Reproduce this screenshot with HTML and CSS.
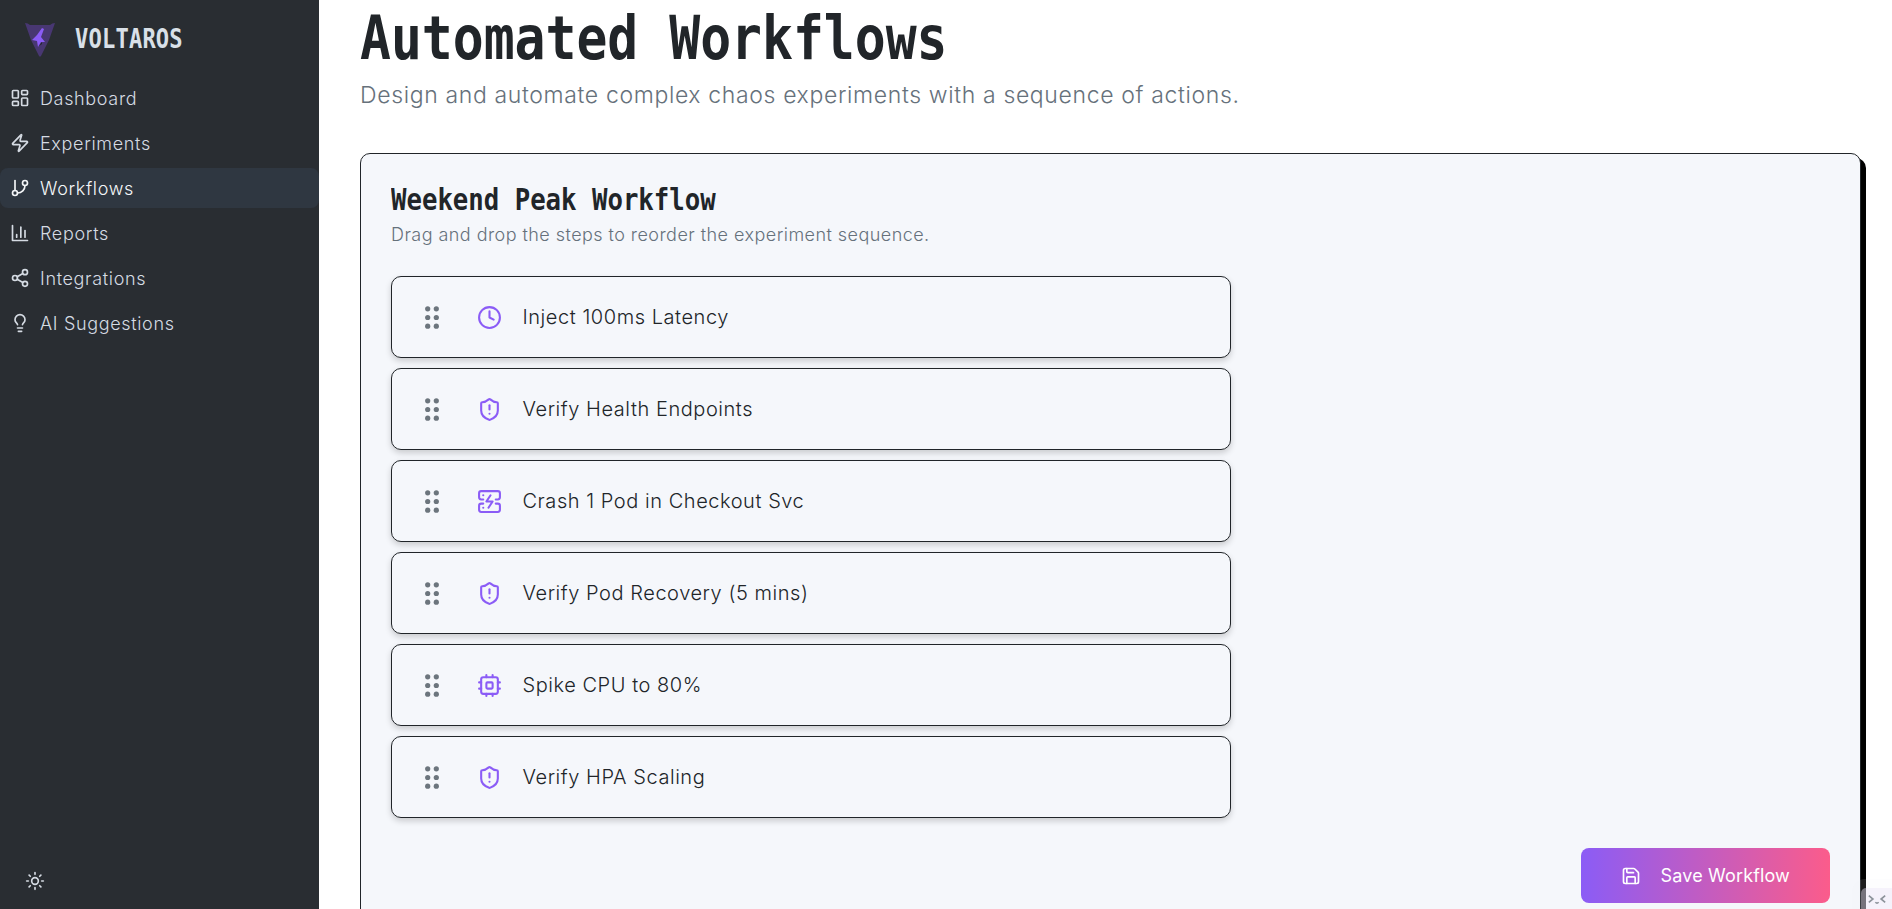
FILE: index.html
```html
<!DOCTYPE html>
<html lang="en">
<head>
<meta charset="utf-8">
<title>Voltaros – Automated Workflows</title>
<link rel="stylesheet" href="styles.css">
</head>
<body>
<aside class="sidebar">
  <div class="brand">
    <svg class="logo" viewBox="0 0 30 35"><path d="M0 1 Q3 1 5 3 H25 Q27 1 30 1 L24 18 L16 34 Q15 35 14 34 L6 18 Z" fill="#483772"/><path d="M17 6 L19 7 L16 15 L20 20 L16 20 L13 25 L12 19 L7 18 L12 13 Z" fill="#8b5cf6"/><path d="M14 24 L17 20 L17 22 Z" fill="#22252a"/></svg>
    <span class="brand-name">VOLTAROS</span>
  </div>
  <nav class="nav">
    <a class="nav-item"><svg class="ic" viewBox="0 0 24 24"><rect width="7" height="9" x="3" y="3" rx="1"/><rect width="7" height="5" x="14" y="3" rx="1"/><rect width="7" height="9" x="14" y="12" rx="1"/><rect width="7" height="5" x="3" y="16" rx="1"/></svg><span>Dashboard</span></a>
    <a class="nav-item"><svg class="ic" viewBox="0 0 24 24"><path d="M4 14a1 1 0 0 1-.78-1.63l9.9-10.2a.5.5 0 0 1 .86.46l-1.92 6.02A1 1 0 0 0 13 10h7a1 1 0 0 1 .78 1.63l-9.9 10.2a.5.5 0 0 1-.86-.46l1.92-6.02A1 1 0 0 0 11 14z"/></svg><span>Experiments</span></a>
    <a class="nav-item active"><svg class="ic" viewBox="0 0 24 24"><path d="M6 3v12"/><circle cx="18" cy="6" r="3"/><circle cx="6" cy="18" r="3"/><path d="M18 9a9 9 0 0 1-9 9"/></svg><span>Workflows</span></a>
    <a class="nav-item"><svg class="ic" viewBox="0 0 24 24"><path d="M3 3v18h18"/><path d="M18 17V9"/><path d="M13 17V5"/><path d="M8 17v-3"/></svg><span>Reports</span></a>
    <a class="nav-item"><svg class="ic" viewBox="0 0 24 24"><circle cx="18" cy="5" r="3"/><circle cx="6" cy="12" r="3"/><circle cx="18" cy="19" r="3"/><path d="M8.590 13.510 15.420 17.490"/><path d="M15.410 6.510 8.590 10.490"/></svg><span>Integrations</span></a>
    <a class="nav-item"><svg class="ic" viewBox="0 0 24 24"><path d="M15 14c.2-1 .7-1.700 1.500-2.500 1-.9 1.500-2.200 1.500-3.500A6 6 0 0 0 6 8c0 1 .2 2.200 1.500 3.500.7.7 1.300 1.500 1.500 2.500"/><path d="M9 18h6"/><path d="M10 22h4"/></svg><span>AI Suggestions</span></a>
  </nav>
  <button class="theme"><svg class="ic" viewBox="0 0 24 24"><circle cx="12" cy="12" r="4"/><path d="M12 2v2"/><path d="M12 20v2"/><path d="m4.930 4.930 1.410 1.410"/><path d="m17.660 17.660 1.410 1.410"/><path d="M2 12h2"/><path d="M20 12h2"/><path d="m6.340 17.660-1.410 1.410"/><path d="m19.070 4.930-1.410 1.410"/></svg></button>
</aside>
<main class="main">
  <h1 class="page-title"><span>Automated Workflows</span></h1>
  <p class="page-sub">Design and automate complex chaos experiments with a sequence of actions.</p>
  <section class="card">
    <h2 class="card-title"><span>Weekend Peak Workflow</span></h2>
    <p class="card-sub">Drag and drop the steps to reorder the experiment sequence.</p>
    <ul class="steps">
      <li class="step"><svg class="grip" viewBox="0 0 14 23"><circle cx="2.700" cy="2.800" r="2.600"/><circle cx="11.300" cy="2.800" r="2.600"/><circle cx="2.700" cy="11.500" r="2.600"/><circle cx="11.300" cy="11.500" r="2.600"/><circle cx="2.700" cy="20.200" r="2.600"/><circle cx="11.300" cy="20.200" r="2.600"/></svg>
        <svg class="step-ic" viewBox="0 0 24 24"><circle cx="12" cy="12" r="10"/><path d="M12 6v6l4 2"/></svg><span>Inject 100ms Latency</span></li>
      <li class="step"><svg class="grip" viewBox="0 0 14 23"><circle cx="2.700" cy="2.800" r="2.600"/><circle cx="11.300" cy="2.800" r="2.600"/><circle cx="2.700" cy="11.500" r="2.600"/><circle cx="11.300" cy="11.500" r="2.600"/><circle cx="2.700" cy="20.200" r="2.600"/><circle cx="11.300" cy="20.200" r="2.600"/></svg>
        <svg class="step-ic" viewBox="0 0 24 24"><path d="M20 13c0 5-3.500 7.500-7.660 8.950a1 1 0 0 1-.67-.01C7.500 20.500 4 18 4 13V6a1 1 0 0 1 1-1c2 0 4.500-1.200 6.240-2.720a1.170 1.170 0 0 1 1.520 0C14.510 3.810 17 5 19 5a1 1 0 0 1 1 1z"/><path d="M12 8v4"/><path d="M12 16h.01"/></svg><span>Verify Health Endpoints</span></li>
      <li class="step"><svg class="grip" viewBox="0 0 14 23"><circle cx="2.700" cy="2.800" r="2.600"/><circle cx="11.300" cy="2.800" r="2.600"/><circle cx="2.700" cy="11.500" r="2.600"/><circle cx="11.300" cy="11.500" r="2.600"/><circle cx="2.700" cy="20.200" r="2.600"/><circle cx="11.300" cy="20.200" r="2.600"/></svg>
        <svg class="step-ic" viewBox="0 0 24 24"><path d="M6 10H4a2 2 0 0 1-2-2V4a2 2 0 0 1 2-2h16a2 2 0 0 1 2 2v4a2 2 0 0 1-2 2h-2"/><path d="M6 14H4a2 2 0 0 0-2 2v4a2 2 0 0 0 2 2h16a2 2 0 0 0 2-2v-4a2 2 0 0 0-2-2h-2"/><path d="M6 6h.01"/><path d="M6 18h.01"/><path d="m13 6-4 6h6l-4 6"/></svg><span>Crash 1 Pod in Checkout Svc</span></li>
      <li class="step"><svg class="grip" viewBox="0 0 14 23"><circle cx="2.700" cy="2.800" r="2.600"/><circle cx="11.300" cy="2.800" r="2.600"/><circle cx="2.700" cy="11.500" r="2.600"/><circle cx="11.300" cy="11.500" r="2.600"/><circle cx="2.700" cy="20.200" r="2.600"/><circle cx="11.300" cy="20.200" r="2.600"/></svg>
        <svg class="step-ic" viewBox="0 0 24 24"><path d="M20 13c0 5-3.500 7.500-7.660 8.950a1 1 0 0 1-.67-.01C7.500 20.500 4 18 4 13V6a1 1 0 0 1 1-1c2 0 4.500-1.200 6.240-2.720a1.170 1.170 0 0 1 1.520 0C14.510 3.810 17 5 19 5a1 1 0 0 1 1 1z"/><path d="M12 8v4"/><path d="M12 16h.01"/></svg><span>Verify Pod Recovery (5 mins)</span></li>
      <li class="step"><svg class="grip" viewBox="0 0 14 23"><circle cx="2.700" cy="2.800" r="2.600"/><circle cx="11.300" cy="2.800" r="2.600"/><circle cx="2.700" cy="11.500" r="2.600"/><circle cx="11.300" cy="11.500" r="2.600"/><circle cx="2.700" cy="20.200" r="2.600"/><circle cx="11.300" cy="20.200" r="2.600"/></svg>
        <svg class="step-ic" viewBox="0 0 24 24"><rect width="16" height="16" x="4" y="4" rx="2"/><rect width="6" height="6" x="9" y="9" rx="1"/><path d="M15 2v2"/><path d="M15 20v2"/><path d="M2 15h2"/><path d="M2 9h2"/><path d="M20 15h2"/><path d="M20 9h2"/><path d="M9 2v2"/><path d="M9 20v2"/></svg><span>Spike CPU to 80%</span></li>
      <li class="step"><svg class="grip" viewBox="0 0 14 23"><circle cx="2.700" cy="2.800" r="2.600"/><circle cx="11.300" cy="2.800" r="2.600"/><circle cx="2.700" cy="11.500" r="2.600"/><circle cx="11.300" cy="11.500" r="2.600"/><circle cx="2.700" cy="20.200" r="2.600"/><circle cx="11.300" cy="20.200" r="2.600"/></svg>
        <svg class="step-ic" viewBox="0 0 24 24"><path d="M20 13c0 5-3.500 7.500-7.660 8.950a1 1 0 0 1-.67-.01C7.500 20.500 4 18 4 13V6a1 1 0 0 1 1-1c2 0 4.500-1.200 6.240-2.720a1.170 1.170 0 0 1 1.520 0C14.510 3.810 17 5 19 5a1 1 0 0 1 1 1z"/><path d="M12 8v4"/><path d="M12 16h.01"/></svg><span>Verify HPA Scaling</span></li>
    </ul>
    <div class="actions">
      <button class="save"><svg class="save-ic" viewBox="0 0 24 24"><path d="M15.200 3a2 2 0 0 1 1.400.6l3.800 3.800a2 2 0 0 1 .6 1.400V19a2 2 0 0 1-2 2H5a2 2 0 0 1-2-2V5a2 2 0 0 1 2-2z"/><path d="M17 21v-7a1 1 0 0 0-1-1H8a1 1 0 0 0-1 1v7"/><path d="M7 3v4a1 1 0 0 0 1 1h7"/></svg><span>Save Workflow</span></button>
    </div>
  </section>
</main>
<div class="corner-widget"><svg viewBox="0 0 22 12"><path d="M1 2 L6 6 L1 10"/><path d="M21 2 L16 6 L21 10"/><path d="M9 10 Q11 12 13 10"/></svg></div>
</body>
</html>
```
FILE: styles.css
```css
* { box-sizing: border-box; }
html, body { margin: 0; height: 100%; }
body {
  display: flex;
  height: 909px;
  overflow: hidden;
  background: #fff;
  color: #212529;
  font-family: Inter, "Noto Sans", sans-serif;
}
.sidebar {
  width: 319px;
  flex: none;
  background: #292d32;
  display: flex;
  flex-direction: column;
  color: #d5dbe3;
}
.brand {
  display: flex;
  align-items: center;
  height: 78px;
  padding-left: 25px;
}
.logo { width: 30px; height: 35px; flex: none; }
.brand-name {
  margin-left: 20px;
  font: 700 26px "DejaVu Sans Mono", monospace;
  line-height: 1;
  color: #d9e0e8;
  display: inline-block;
  transform: scaleX(0.85);
  transform-origin: left center;
  letter-spacing: 0.2px;
}
.nav { display: flex; flex-direction: column; gap: 5px; }
.nav-item {
  display: flex;
  align-items: center;
  gap: 10px;
  height: 40px;
  padding-left: 10px;
  border-radius: 8px;
  font-size: 18px;
  font-weight: 300;
  letter-spacing: 0.66px;
}
.nav-item.active { background: #2f3741; color: #f4f6f8; }
.ic {
  width: 20px;
  height: 20px;
  flex: none;
  fill: none;
  stroke: currentColor;
  stroke-width: 2;
  stroke-linecap: round;
  stroke-linejoin: round;
}
.theme {
  margin-top: auto;
  margin-bottom: 18px;
  margin-left: 25px;
  padding: 0;
  width: 20px;
  height: 20px;
  background: none;
  border: 0;
  color: #d5dbe3;
}
.main {
  flex: 1;
  min-width: 0;
  padding: 0 31px 0 41px;
  overflow: hidden;
}
.page-title {
  margin: 0;
  height: 76px;
  font: 700 60px/76px "DejaVu Sans Mono", monospace;
  color: #212529;
  white-space: nowrap;
}
.page-title span {
  display: inline-block;
  transform: scaleX(0.856);
  transform-origin: left center;
}
.page-sub {
  margin: 0;
  height: 77px;
  padding-top: 5px;
  font-size: 23px;
  font-weight: 300;
  letter-spacing: 0.64px;
  color: #66717b;
  white-space: nowrap;
}
.card {
  height: 800px;
  background: #f5f7fb;
  border: 1px solid #212529;
  border-radius: 10px;
  box-shadow: 5px 5px 0 #000;
  padding: 28px 30px 30px;
}
.card-title {
  margin: 0;
  font: 700 30px/36px "DejaVu Sans Mono", monospace;
  color: #212529;
  white-space: nowrap;
}
.card-title span {
  display: inline-block;
  transform: scaleX(0.856);
  transform-origin: left center;
}
.card-sub {
  margin: 6px 0 0;
  font-size: 18px;
  font-weight: 300;
  letter-spacing: 0.45px;
  color: #66717b;
}
.steps {
  list-style: none;
  margin: 31px 0 0;
  padding: 0;
  width: 840px;
  display: flex;
  flex-direction: column;
  gap: 10px;
}
.step {
  display: flex;
  align-items: center;
  height: 82px;
  padding-left: 33px;
  border: 1px solid #212529;
  border-radius: 10px;
  background: #f5f7fb;
  box-shadow: 0 3px 6px rgba(0, 0, 0, 0.18);
  font-size: 20px;
  font-weight: 300;
  letter-spacing: 0.55px;
}
.grip { width: 14px; height: 23px; flex: none; fill: #6c757d; margin-right: 37.500px; }
.step-ic {
  width: 25px;
  height: 25px;
  flex: none;
  margin-right: 21px;
  fill: none;
  stroke: #8b5cf6;
  stroke-width: 2;
  stroke-linecap: round;
  stroke-linejoin: round;
}
.actions { display: flex; justify-content: flex-end; margin-top: 30px; }
.save {
  display: flex;
  align-items: center;
  gap: 20px;
  height: 55px;
  padding: 0 40px;
  border: 0;
  border-radius: 8px;
  background: linear-gradient(90deg, #8b5cf6, #fb5c8b);
  color: #fff;
  font-family: inherit;
  font-size: 18px;
  font-weight: 400;
  letter-spacing: 0.15px;
}
.save-ic { width: 20px; height: 20px; fill: none; stroke: currentColor; stroke-width: 2; stroke-linecap: round; stroke-linejoin: round; }
.corner-widget {
  position: fixed;
  right: 0;
  bottom: 0;
  width: 31px;
  height: 21px;
  border-radius: 5px 0 0 0;
  background: rgba(235, 230, 248, 0.5);
  box-shadow: 0 0 0 9px rgba(240, 240, 250, 0.12);
  display: flex;
  align-items: center;
  justify-content: center;
}
.corner-widget svg { width: 18px; height: 10px; fill: none; stroke: #8d939b; stroke-width: 2; }
```
